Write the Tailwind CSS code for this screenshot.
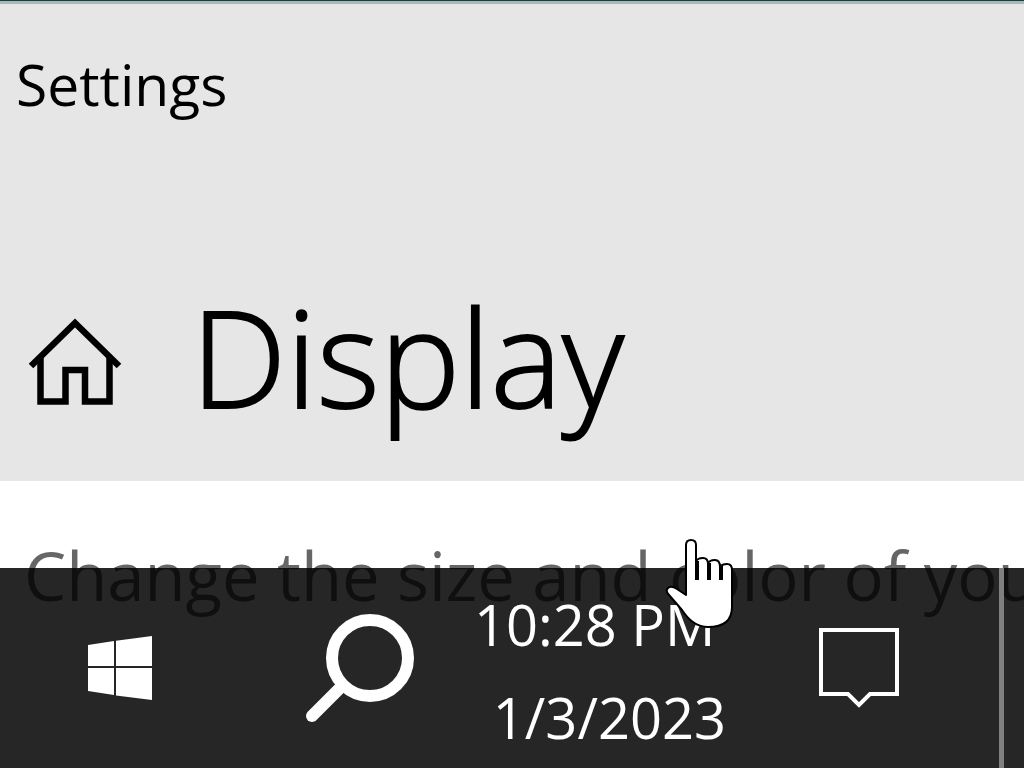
<!DOCTYPE html>
<html lang="en">
<head>
    <meta charset="UTF-8">
    <meta name="viewport" content="width=device-width, initial-scale=1.0">
    <title>Settings</title>
    <script src="https://cdn.jsdelivr.net/npm/@tailwindcss/browser@4"></script>
</head>
<body class="relative h-screen overflow-hidden bg-white font-['Open_Sans',sans-serif] text-black">
    <!-- Settings window -->
    <header class="border-t border-[#1f3a3a] bg-[#e6e6e6]">
        <div class="h-[3px] bg-[#a9b8b8]"></div>
        <div class="px-4 pt-10 text-[57px] leading-[80px]">Settings</div>
        <div class="flex items-center gap-[69px] pt-[140px] pb-[33px] pl-7">
            <button aria-label="Home" class="pt-[14px]">
                <svg class="h-[90px] w-[94px]" viewBox="0 0 94 90" fill="none" stroke="#000" stroke-width="6.500">
                    <path d="M3 48 47 5 91 48" />
                    <path d="M12.500 40V83.500H37.500V52H57V83.500H81.500V40" />
                </svg>
            </button>
            <h1 class="text-[135px] leading-[184px] font-light [-webkit-text-stroke:2px_black]">Display</h1>
        </div>
    </header>

    <!-- Page content, partly behind the taskbar -->
    <main class="px-6 pt-[46px]">
        <p class="text-[67px] leading-[96px] whitespace-nowrap text-[#666]">Change the size and color of your</p>
    </main>

    <!-- Taskbar -->
    <footer class="absolute inset-x-0 bottom-0 flex h-[200px] bg-black/85 text-white">
        <button aria-label="Start" class="flex w-60 items-center justify-center">
            <svg class="size-16" viewBox="0 0 64 64" fill="#fff">
                <path d="M0 9 26 5V30H0ZM28 4.700 64 0V30H28ZM0 32H26V59L0 55ZM28 32H64V64L28 59.400Z" />
            </svg>
        </button>
        <button aria-label="Search" class="flex w-[234px] items-center justify-center pl-[6px]">
            <svg class="size-27" viewBox="0 0 108 108" fill="none" stroke="#fff" stroke-width="12" stroke-linecap="round">
                <circle cx="64" cy="44" r="38" />
                <path d="M35 73 6 102" />
            </svg>
        </button>
        <button class="flex w-[252px] flex-col pt-[10px] text-[56px] leading-[93px] whitespace-nowrap">
            <span class="self-start">10:28 PM</span>
            <span class="self-end">1/3/2023</span>
        </button>
        <button aria-label="Notifications" class="flex flex-1 items-center justify-center pr-2">
            <svg class="h-20 w-20" viewBox="0 0 80 80" fill="none" stroke="#fff" stroke-width="4">
                <path d="M2 2H78V66H51L40 77 29 66H2Z" />
            </svg>
        </button>
        <button aria-label="Show desktop" class="w-[25px] border-l-[5px] border-[#808080]"></button>
    </footer>

    <!-- Hand pointer -->
    <svg class="absolute top-[538px] left-[665px] h-[92px] w-[70px]" viewBox="0 0 70 92" fill="#fff" stroke="#000" stroke-width="2" stroke-linejoin="round">
        <path d="M21 57V7Q21 2 26 2T31 7V24Q32 20 38 20Q43 20 43 26Q44 22 50 22Q55 22 55 29Q57 26 62 26Q67 26 67 32V69Q67 89 43 89Q28 89 17 72L4 57Q0 53 3 50Q6 47 12 51Z" />
        <path d="M32 23V42M44 25V42M56 28V42" fill="none" stroke-width="4" />
    </svg>
</body>
</html>
